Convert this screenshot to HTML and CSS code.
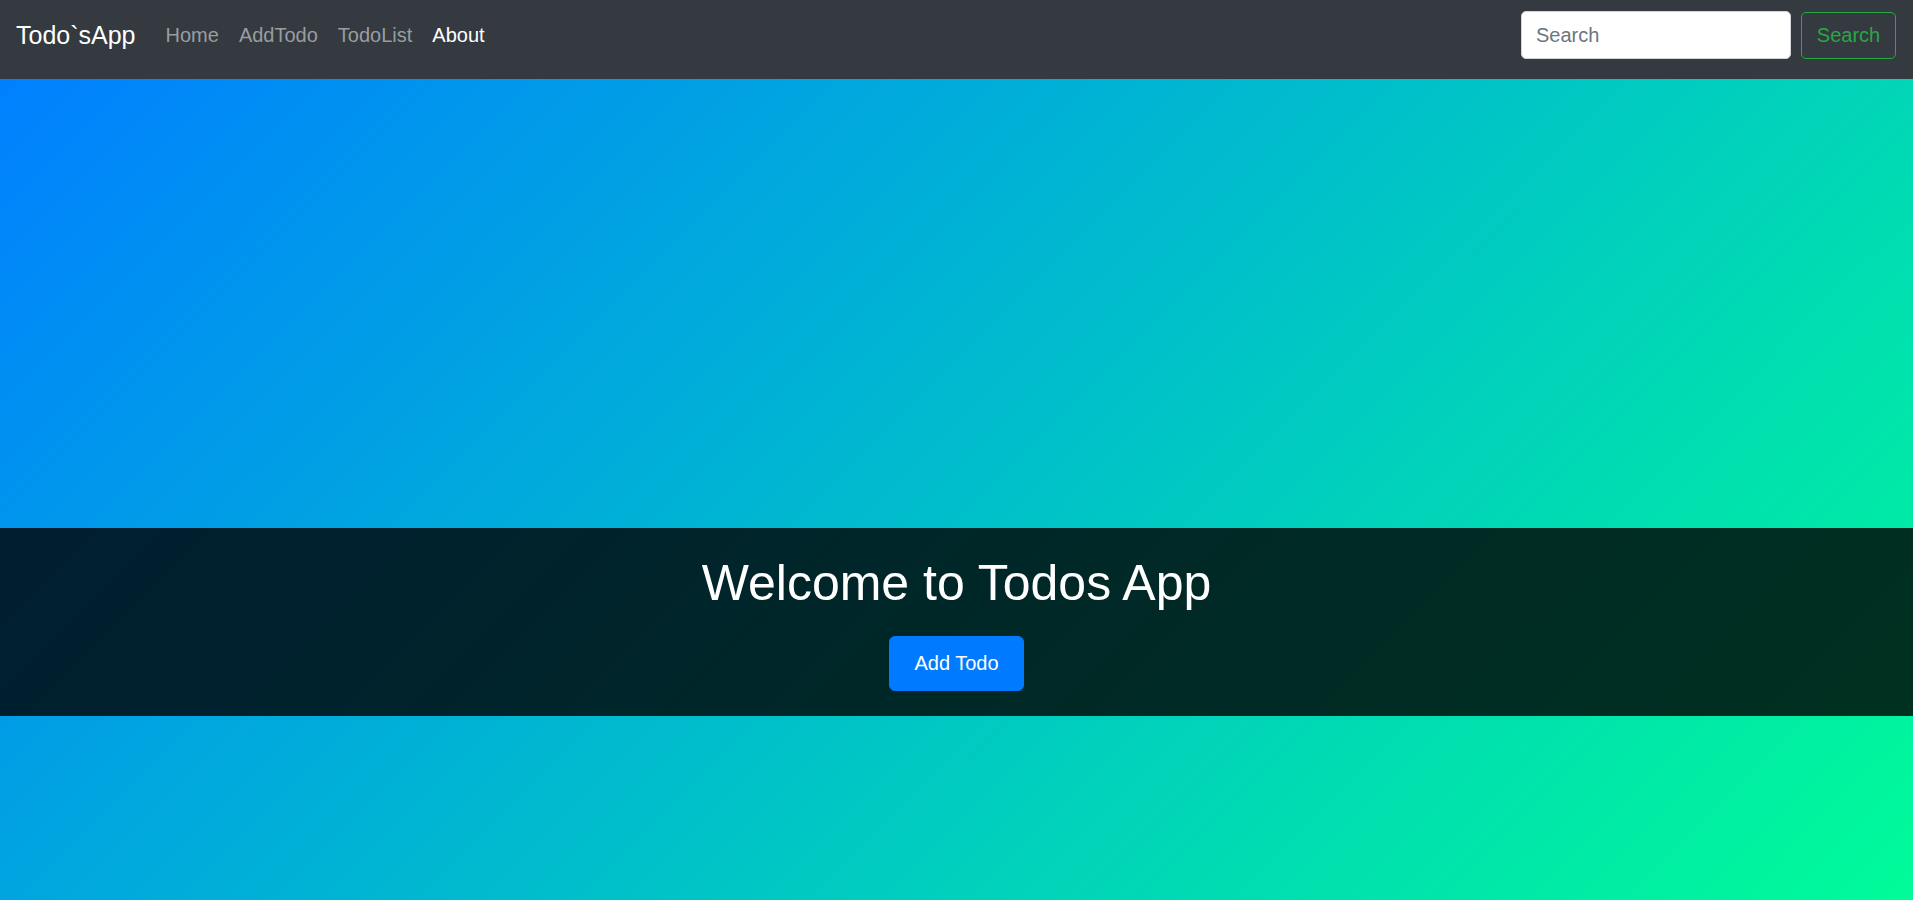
FILE: index.html
```html
<!DOCTYPE html>
<html lang="en">
<head>
<meta charset="utf-8">
<title>Todo`sApp</title>
<link rel="stylesheet" href="styles.css">
</head>
<body>
<nav class="navbar">
  <a class="brand" href="#">Todo`sApp</a>
  <ul class="nav-links">
    <li><a class="nav-link" href="#">Home</a></li>
    <li><a class="nav-link" href="#">AddTodo</a></li>
    <li><a class="nav-link" href="#">TodoList</a></li>
    <li><a class="nav-link active" href="#">About</a></li>
  </ul>
  <form class="search-form">
    <input class="search-input" type="search" placeholder="Search">
    <button class="search-btn" type="button">Search</button>
  </form>
</nav>
<main class="hero">
  <section class="band">
    <h1 class="title">Welcome to Todos App</h1>
    <button class="add-btn" type="button">Add Todo</button>
  </section>
</main>
</body>
</html>
```
FILE: styles.css
```css
* { box-sizing: border-box; }
html, body { margin: 0; padding: 0; }
body {
  font-family: "Liberation Sans", Arial, sans-serif;
  font-size: 20px;
  line-height: 1.5;
  color: #212529;
  overflow: hidden;
  height: 900px;
}
.navbar {
  height: 79px;
  background: #343a40;
  display: flex;
  align-items: center;
  padding: 0 17px 9px 16px;
}
.brand {
  color: #fff;
  text-decoration: none;
  font-size: 25px;
  line-height: 36px;
  margin-right: 20px;
}
.nav-links {
  list-style: none;
  margin: 0;
  padding: 0;
  display: flex;
  flex: 1;
}
.nav-link {
  display: block;
  padding: 0 10px;
  color: #9a9da0;
  text-decoration: none;
  font-size: 20px;
  line-height: 30px;
}
.nav-link.active { color: #fff; }
.search-form {
  display: flex;
  align-items: center;
}
.search-input {
  width: 270px;
  height: 48px;
  border: 1px solid #ced4da;
  border-radius: 5px;
  padding: 0 14px;
  font-family: inherit;
  font-size: 20px;
  color: #495057;
  background: #fff;
  margin-right: 10px;
  outline: none;
}
.search-input::placeholder { color: #6c757d; }
.search-btn {
  width: 95px;
  height: 47px;
  border: 1px solid #28a745;
  border-radius: 5px;
  background: transparent;
  color: #28a745;
  font-family: inherit;
  font-size: 20px;
  padding: 0;
}
.hero {
  height: 821px;
  background: linear-gradient(135deg, #0080ff 0%, #00fc98 100%);
  padding-top: 449px;
}
.band {
  background: rgba(0, 0, 0, 0.8);
  text-align: center;
  padding: 25px 0 25px;
}
.title {
  margin: 0 0 23px;
  font-weight: 400;
  font-size: 50px;
  line-height: 60px;
  color: #fff;
}
.add-btn {
  background: #007bff;
  border: 1px solid #007bff;
  color: #fff;
  border-radius: 6px;
  font-family: inherit;
  font-size: 20px;
  line-height: 29px;
  padding: 12px 24px;
}
```
